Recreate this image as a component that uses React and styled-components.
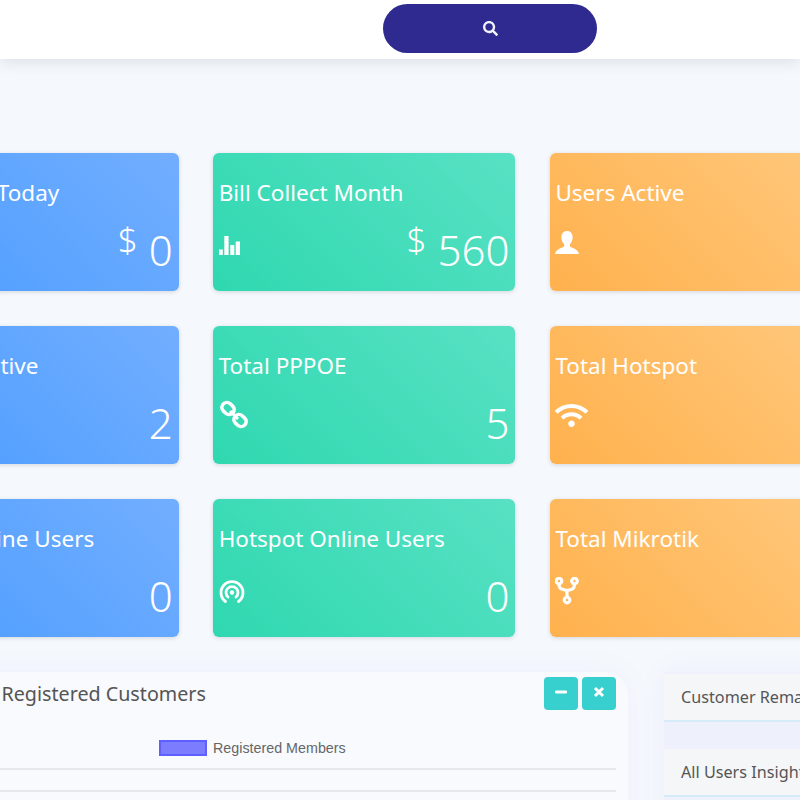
import styled, { createGlobalStyle } from "styled-components"
import { FaSearch, FaWifi } from "react-icons/fa"

const GlobalStyle = createGlobalStyle`
  html, body {
    margin: 0;
    padding: 0;
    background: #f5f8fc;
  }
`

const Page = styled.div`
  width: 800px;
  height: 800px;
  overflow: hidden;
  background: #f5f8fc;
  font-family: "Noto Sans", "Open Sans", sans-serif;
`

const Header = styled.header`
  height: 59px;
  background: #fff;
  box-shadow: 0 2px 14px rgba(60, 70, 90, 0.14);
  display: flex;
  align-items: flex-start;
  padding: 4px 0 0 383px;
  box-sizing: border-box;
`

const SearchButton = styled.button`
  width: 214px;
  height: 49px;
  border: none;
  border-radius: 25px;
  background: #2e2a8f;
  color: #f2f2fa;
  font-size: 15px;
  display: flex;
  align-items: center;
  justify-content: center;
`

const Main = styled.main`
  width: 1100px;
  margin-left: -123.5px;
  padding-top: 94px;
`

const CardGrid = styled.div`
  display: grid;
  grid-template-columns: repeat(3, 302.3px);
  grid-auto-rows: 138px;
  gap: 35px 34.4px;
`

const tones = {
  blue: "linear-gradient(45deg, #4a9cff, #72aeff)",
  green: "linear-gradient(45deg, #2fd8b0, #58e1c4)",
  orange: "linear-gradient(45deg, #ffb14d, #ffc97e)",
}

const Card = styled.div`
  background: ${(p) => tones[p.$tone]};
  border-radius: 6px;
  box-shadow: 0 1px 4px rgba(60, 70, 90, 0.18);
  color: #fff;
  padding: 25px 6px 0 5.5px;
  box-sizing: border-box;
`

const CardTitle = styled.div`
  font-size: 22.5px;
  line-height: 30px;
  white-space: nowrap;
`

const CardBody = styled.div`
  display: flex;
  justify-content: space-between;
  align-items: flex-start;
  margin-top: 14px;
`

const CardIcon = styled.div`
  width: 34px;
  padding-top: ${(p) => p.$top}px;
  svg {
    display: block;
  }
`

const Amount = styled.div`
  font-size: 42px;
  font-weight: 300;
  line-height: 56px;
  display: flex;
  align-items: flex-start;
  gap: 11px;
`

const Currency = styled.span`
  font-size: 35px;
  line-height: 36px;
`

const BottomRow = styled.div`
  display: grid;
  grid-template-columns: 751.5px 300px;
  gap: 36px;
  margin-top: 35px;
`

const ChartPanel = styled.section`
  height: 200px;
  background: #f8fafd;
  border-radius: 0 24px 0 0;
  box-shadow: 0 0 30px rgba(110, 120, 255, 0.05);
  padding: 5px 12px 0 0;
`

const PanelHead = styled.div`
  display: flex;
  justify-content: space-between;
  align-items: flex-start;
`

const PanelTitle = styled.h3`
  margin: 0;
  padding: 3px 0 0 125px;
  font-size: 19.7px;
  line-height: 27px;
  font-weight: 400;
  color: #555;
`

const PanelTools = styled.div`
  display: flex;
  gap: 4px;
`

const ToolButton = styled.button`
  width: 34px;
  height: 33px;
  border: none;
  border-radius: 4px;
  background: #38cfcf;
  color: #fff;
  padding: 0 0 4px;
  display: flex;
  align-items: center;
  justify-content: center;
`

const Legend = styled.div`
  display: flex;
  align-items: center;
  gap: 6px;
  margin: 28px 0 0 282.5px;
  height: 20px;
  font-family: "Liberation Sans", sans-serif;
  font-size: 14.3px;
  color: #666;
`

const Swatch = styled.span`
  width: 44px;
  height: 12px;
  background: #7c7cff;
  border: 2px solid #5f5fff;
`

const GridLine = styled.div`
  height: 2px;
  background: #e6e9ec;
  margin-top: ${(p) => p.$gap}px;
`

const SideColumn = styled.div`
  display: flex;
  flex-direction: column;
  gap: 27px;
  padding-top: 2px;
`

const SideBar = styled.div`
  height: 46px;
  background: #f5f6f8;
  border-bottom: 2px solid #d5ebf8;
  padding-left: 17px;
  font-size: 16.2px;
  line-height: 47px;
  color: #555;
  white-space: nowrap;
`

const SideWrap = styled.div`
  background: #eef1fc;
  box-shadow: 0 0 24px rgba(110, 120, 255, 0.08);
  height: 200px;
`

function BarsIcon() {
  return (
    <svg width="21" height="19" viewBox="0 0 21 19" fill="#fff">
      <rect x="0" y="13.500" width="3.800" height="5.500" />
      <rect x="5.300" y="0" width="4.300" height="19" />
      <rect x="11.300" y="9" width="4" height="10" />
      <rect x="16.700" y="5.500" width="4.300" height="13.500" />
    </svg>
  )
}

function UserIcon() {
  return (
    <svg width="24" height="24" viewBox="0 0 24 24" fill="#fff">
      <path d="M12 0c3.600 0 5.600 2.600 5.600 6.400 0 2.800-1.200 5.200-2.700 6.800v2.200c1 1.100 8.600 2.600 9.100 7.600H0c.5-5 8.100-6.500 9.100-7.600v-2.200C7.600 11.600 6.400 9.200 6.400 6.400 6.400 2.600 8.400 0 12 0z" />
    </svg>
  )
}

function LinkIcon() {
  return (
    <svg width="30" height="30" viewBox="0 0 30 30" fill="none" stroke="#fff" strokeWidth="3.600">
      <rect x="2.500" y="3.500" width="13" height="10" rx="5" transform="rotate(42 9 8.500)" />
      <rect x="14.500" y="15.500" width="13" height="10" rx="5" transform="rotate(42 21 20.500)" />
      <path d="M11 11l8 8" strokeWidth="3" />
    </svg>
  )
}

function PodcastIcon() {
  return (
    <svg width="26" height="26" viewBox="0 0 26 26" fill="none" stroke="#fff" strokeWidth="2.800" strokeLinecap="round">
      <path d="M6.500 22.500a11 11 0 1 1 13 0" />
      <path d="M9 18a6 6 0 1 1 8 0" />
      <circle cx="13" cy="13.500" r="2.200" fill="#fff" stroke="none" />
    </svg>
  )
}

function ForkIcon() {
  return (
    <svg width="24" height="28" viewBox="0 0 24 28" fill="none" stroke="#fff" strokeWidth="3.200">
      <circle cx="4" cy="4" r="2.800" />
      <circle cx="19.500" cy="4" r="2.800" />
      <circle cx="12" cy="23" r="2.800" />
      <path d="M4 7c0 3 1 5 4 5.500l4 1 4-1c3-.5 3.500-2.500 3.500-5.500M12 13v7" />
    </svg>
  )
}

const cards = [
  { title: "Bill Collect Today", tone: "blue", value: "0", money: true },
  { title: "Bill Collect Month", tone: "green", value: "560", money: true, icon: <BarsIcon />, top: 14 },
  { title: "Users Active", tone: "orange", icon: <UserIcon />, top: 9 },
  { title: "Users In Active", tone: "blue", value: "2" },
  { title: "Total PPPOE", tone: "green", value: "5", icon: <LinkIcon />, top: 5 },
  { title: "Total Hotspot", tone: "orange", icon: <FaWifi size={33} />, top: 4 },
  { title: "PPPOE Online Users", tone: "blue", value: "0" },
  { title: "Hotspot Online Users", tone: "green", value: "0", icon: <PodcastIcon />, top: 11 },
  { title: "Total Mikrotik", tone: "orange", icon: <ForkIcon />, top: 9 },
]

export default function App() {
  return (
    <Page>
      <GlobalStyle />
      <Header>
        <SearchButton aria-label="Search">
          <FaSearch />
        </SearchButton>
      </Header>
      <Main>
        <CardGrid>
          {cards.map((card) => (
            <Card key={card.title} $tone={card.tone}>
              <CardTitle>{card.title}</CardTitle>
              <CardBody>
                <CardIcon $top={card.top}>{card.icon}</CardIcon>
                {card.value && (
                  <Amount>
                    {card.money && <Currency>$</Currency>}
                    {card.value}
                  </Amount>
                )}
              </CardBody>
            </Card>
          ))}
        </CardGrid>
        <BottomRow>
          <ChartPanel>
            <PanelHead>
              <PanelTitle>Registered Customers</PanelTitle>
              <PanelTools>
                <ToolButton aria-label="Collapse">
                  <svg width="12" height="12" viewBox="0 0 12 12" fill="#fff">
                    <rect x="0" y="4.500" width="12" height="3" rx="1" />
                  </svg>
                </ToolButton>
                <ToolButton aria-label="Close">
                  <svg width="12" height="12" viewBox="0 0 12 12" fill="none" stroke="#fff" strokeWidth="3">
                    <path d="M2 2l8 8M10 2l-8 8" />
                  </svg>
                </ToolButton>
              </PanelTools>
            </PanelHead>
            <Legend>
              <Swatch />
              Registered Members
            </Legend>
            <GridLine $gap={10} />
            <GridLine $gap={20} />
          </ChartPanel>
          <SideWrap>
            <SideColumn>
              <SideBar>Customer Remaining Days</SideBar>
              <SideBar>All Users Insights</SideBar>
            </SideColumn>
          </SideWrap>
        </BottomRow>
      </Main>
    </Page>
  )
}
